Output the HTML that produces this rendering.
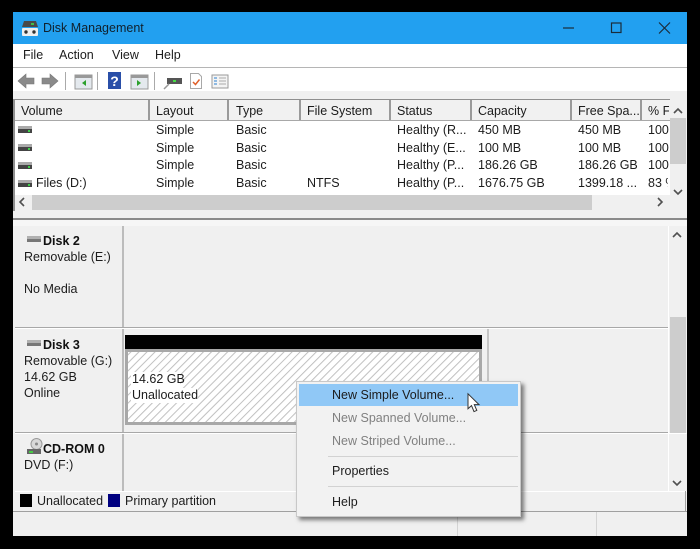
<!DOCTYPE html>
<html><head><meta charset="utf-8"><style>
html,body{margin:0;padding:0;background:#000;width:700px;height:549px;overflow:hidden}
body{position:relative;font-family:"Liberation Sans",sans-serif;font-size:12.5px;color:#1c1c1c;filter:blur(.3px)}
.a,.t{position:absolute}
.t{white-space:nowrap;line-height:16px}
.b{font-weight:bold;color:#111}
.h{position:absolute;top:100px;height:20px;background:#f1f1f1;border-right:2px solid #9a9a9a;box-sizing:border-box}
.g{color:#808080}
svg{position:absolute;overflow:visible}
</style></head><body>
<!-- window -->
<div class="a" style="left:13px;top:12px;width:674px;height:524px;background:#f0f0f0"></div>
<div class="a" style="left:13px;top:12px;width:674px;height:32px;background:#22a0f0"></div>
<svg style="left:21px;top:20px" width="18" height="17" viewBox="0 0 18 17"><path d="M3 1h12l2 6H1z" fill="#4a4a4a"/><rect x="10" y="3" width="3" height="2" fill="#3fc04a"/><rect x="1" y="8" width="16" height="8" rx="1" fill="#efefef"/><circle cx="5" cy="12" r="1.7" fill="#333"/><circle cx="13" cy="12" r="1.7" fill="#333"/></svg>
<div class="t" style="left:43px;top:20px;font-size:12.5px;color:#10202c">Disk Management</div>
<svg style="left:563px;top:20px" width="110" height="16" viewBox="0 0 110 16" fill="none" stroke="#1a2c3a" stroke-width="1.2"><path d="M0 8h11"/><rect x="48.5" y="3" width="9.5" height="9.5"/><path d="M96 2.500l11 11M107 2.500l-11 11"/></svg>
<!-- menu -->
<div class="a" style="left:13px;top:44px;width:674px;height:23px;background:#fff"></div>
<div class="a" style="left:13px;top:67px;width:674px;height:1px;background:#b5b5b5"></div>
<div class="t" style="left:23px;top:47px">File</div>
<div class="t" style="left:59px;top:47px">Action</div>
<div class="t" style="left:112px;top:47px">View</div>
<div class="t" style="left:155px;top:47px">Help</div>
<!-- toolbar -->
<div class="a" style="left:13px;top:68px;width:674px;height:23px;background:#fff"></div>
<svg style="left:17px;top:72px" width="215" height="18" viewBox="0 0 215 18">
<path d="M1 9l8-7v4h8v6H9v4z" fill="#8a8a8a" stroke="#777" stroke-width=".6"/>
<path d="M41 9l-8-7v4h-8v6h8v4z" fill="#8a8a8a" stroke="#777" stroke-width=".6"/>
<rect x="48" y="0" width="1" height="18" fill="#aaa"/>
<rect x="58" y="3" width="17" height="14" fill="#e4e9ee" stroke="#999"/><rect x="58" y="3" width="17" height="3" fill="#999"/><path d="M69 8v6l-4-3z" fill="#2ca02c"/>
<rect x="80" y="0" width="1" height="18" fill="#aaa"/>
<rect x="91" y="0" width="13" height="17" fill="#2a4fa8"/><text x="97.500" y="14" font-family="Liberation Sans" font-size="14" font-weight="bold" fill="#fff" text-anchor="middle">?</text>
<rect x="114" y="3" width="17" height="14" fill="#e4e9ee" stroke="#999"/><rect x="114" y="3" width="17" height="3" fill="#999"/><path d="M120 8v6l4-3z" fill="#2ca02c"/>
<rect x="137" y="0" width="1" height="18" fill="#aaa"/>
<rect x="150" y="6" width="15" height="6" fill="#555"/><rect x="156" y="8" width="3" height="2" fill="#4d4"/><path d="M152 12l-5 5" stroke="#999" stroke-width="1.500"/>
<path d="M173.500 1.500h8l3 3v12h-11z" fill="#fff" stroke="#a8a8a8"/><path d="M176 10l2.500 2.500 4-5" fill="none" stroke="#e0602a" stroke-width="1.500"/>
<rect x="195" y="3" width="16" height="13" fill="#f4f4f4" stroke="#9a9a9a"/><path d="M197 6h3M197 9h3M197 12h3" stroke="#2a80d0"/><path d="M202 6h7M202 9h7M202 12h7" stroke="#aaa"/>
</svg>
<div class="a" style="left:13px;top:91px;width:674px;height:8px;background:#f0f0f0"></div>
<!-- list -->
<div class="a" style="left:13px;top:99px;width:657px;height:1px;background:#8f8f8f"></div>
<div class="a" style="left:13px;top:99px;width:2px;height:112px;background:#8f8f8f"></div>
<div class="a" style="left:15px;top:100px;width:655px;height:95px;background:#fff"></div>
<div class="h" style="left:15px;width:135px"></div>
<div class="h" style="left:150px;width:79px"></div>
<div class="h" style="left:229px;width:72px"></div>
<div class="h" style="left:301px;width:90px"></div>
<div class="h" style="left:391px;width:81px"></div>
<div class="h" style="left:472px;width:100px"></div>
<div class="h" style="left:572px;width:70px"></div>
<div class="h" style="left:642px;width:28px;border-right:0"></div>
<div class="a" style="left:15px;top:120px;width:655px;height:1px;background:#a8a8a8"></div>
<div class="t" style="left:21px;top:103px">Volume</div>
<div class="t" style="left:156px;top:103px">Layout</div>
<div class="t" style="left:236px;top:103px">Type</div>
<div class="t" style="left:307px;top:103px">File System</div>
<div class="t" style="left:397px;top:103px">Status</div>
<div class="t" style="left:478px;top:103px">Capacity</div>
<div class="t" style="left:578px;top:103px">Free Spa...</div>
<div class="t" style="left:648px;top:103px;width:21px;overflow:hidden">% F</div>
<!-- rows -->
<svg style="left:18px;top:125px" width="14" height="60" viewBox="0 0 14 60">
<g id="d"><rect x="0" y="1" width="14" height="3" fill="#aaa"/><rect x="0" y="4" width="14" height="4" fill="#444"/><rect x="10" y="5" width="2" height="2" fill="#3fd04a"/></g>
<g transform="translate(0,18)"><rect x="0" y="1" width="14" height="3" fill="#aaa"/><rect x="0" y="4" width="14" height="4" fill="#444"/><rect x="10" y="5" width="2" height="2" fill="#3fd04a"/></g>
<g transform="translate(0,36)"><rect x="0" y="1" width="14" height="3" fill="#aaa"/><rect x="0" y="4" width="14" height="4" fill="#444"/><rect x="10" y="5" width="2" height="2" fill="#3fd04a"/></g>
<g transform="translate(0,54)"><rect x="0" y="1" width="14" height="3" fill="#aaa"/><rect x="0" y="4" width="14" height="4" fill="#444"/><rect x="10" y="5" width="2" height="2" fill="#3fd04a"/></g>
</svg>
<div class="t" style="left:156px;top:122px">Simple</div><div class="t" style="left:236px;top:122px">Basic</div><div class="t" style="left:397px;top:122px">Healthy (R...</div><div class="t" style="left:478px;top:122px">450 MB</div><div class="t" style="left:578px;top:122px">450 MB</div><div class="t" style="left:648px;top:122px">100</div>
<div class="t" style="left:156px;top:140px">Simple</div><div class="t" style="left:236px;top:140px">Basic</div><div class="t" style="left:397px;top:140px">Healthy (E...</div><div class="t" style="left:478px;top:140px">100 MB</div><div class="t" style="left:578px;top:140px">100 MB</div><div class="t" style="left:648px;top:140px">100</div>
<div class="t" style="left:156px;top:157px">Simple</div><div class="t" style="left:236px;top:157px">Basic</div><div class="t" style="left:397px;top:157px">Healthy (P...</div><div class="t" style="left:478px;top:157px">186.26 GB</div><div class="t" style="left:578px;top:157px">186.26 GB</div><div class="t" style="left:648px;top:157px">100</div>
<div class="t" style="left:36px;top:175px">Files (D:)</div><div class="t" style="left:156px;top:175px">Simple</div><div class="t" style="left:236px;top:175px">Basic</div><div class="t" style="left:307px;top:175px">NTFS</div><div class="t" style="left:397px;top:175px">Healthy (P...</div><div class="t" style="left:478px;top:175px">1676.75 GB</div><div class="t" style="left:578px;top:175px">1399.18 ...</div><div class="t" style="left:648px;top:175px;width:20px;overflow:hidden">83 %</div>
<!-- list scrollbars -->
<div class="a" style="left:670px;top:100px;width:17px;height:111px;background:#f0f0f0"></div>
<div class="a" style="left:670px;top:118px;width:16px;height:46px;background:#cdcdcd"></div>
<div class="a" style="left:15px;top:195px;width:655px;height:16px;background:#f0f0f0"></div>
<div class="a" style="left:32px;top:195px;width:560px;height:15px;background:#cdcdcd"></div>
<svg style="left:15px;top:100px" width="672" height="112" viewBox="0 0 672 112" fill="none" stroke="#505050" stroke-width="1.600"><path d="M659 13l4-4 4 4M659 90l4 4 4-4M9 98l-4 4 4 4M643 98l4 4-4 4"/></svg>
<!-- divider -->
<div class="a" style="left:13px;top:211px;width:674px;height:7px;background:#f0f0f0"></div>
<div class="a" style="left:13px;top:218px;width:674px;height:2px;background:#8a8a8a"></div>
<div class="a" style="left:13px;top:220px;width:674px;height:6px;background:#f6f6f6"></div>
<!-- lower pane -->
<div class="a" style="left:15px;top:226px;width:653px;height:265px;background:#f0f0f0"></div>
<div class="a" style="left:668px;top:226px;width:1px;height:265px;background:#fff"></div>
<div class="a" style="left:122px;top:226px;width:2px;height:265px;background:#bcbcbc"></div>
<div class="a" style="left:15px;top:327px;width:653px;height:1px;background:#a8a8a8"></div>
<div class="a" style="left:15px;top:432px;width:653px;height:1px;background:#a8a8a8"></div>
<div class="a" style="left:15px;top:328px;width:653px;height:1px;background:#fff"></div>
<div class="a" style="left:15px;top:433px;width:653px;height:1px;background:#fff"></div>
<!-- right scrollbar -->
<div class="a" style="left:669px;top:226px;width:18px;height:265px;background:#f0f0f0"></div>
<div class="a" style="left:670px;top:317px;width:16px;height:116px;background:#cdcdcd"></div>
<div class="a" style="left:669px;top:433px;width:18px;height:1px;background:#fff"></div>
<svg style="left:669px;top:226px" width="18" height="265" viewBox="0 0 18 265" fill="none" stroke="#505050" stroke-width="1.600"><path d="M4 11l4-4 4 4M4 255l4 4 4-4"/></svg>
<!-- disk labels -->
<svg style="left:27px;top:236px" width="14" height="8"><rect width="14" height="3" fill="#b0b0b0"/><rect y="3" width="14" height="3" fill="#777"/></svg>
<div class="t b" style="left:43px;top:233px">Disk 2</div>
<div class="t" style="left:24px;top:249px">Removable (E:)</div>
<div class="t" style="left:24px;top:281px">No Media</div>
<svg style="left:27px;top:340px" width="14" height="8"><rect width="14" height="3" fill="#b0b0b0"/><rect y="3" width="14" height="3" fill="#777"/></svg>
<div class="t b" style="left:43px;top:337px">Disk 3</div>
<div class="t" style="left:24px;top:353px">Removable (G:)</div>
<div class="t" style="left:24px;top:369px">14.62 GB</div>
<div class="t" style="left:24px;top:385px">Online</div>
<svg style="left:27px;top:438px" width="16" height="17" viewBox="0 0 16 17"><circle cx="9.500" cy="6" r="5.500" fill="#d8d8d8" stroke="#999"/><circle cx="9.500" cy="6" r="1.500" fill="#888"/><rect x="0" y="11" width="14" height="5" fill="#666"/><rect x="2" y="13" width="4" height="2" fill="#4c4"/></svg>
<div class="t b" style="left:43px;top:441px">CD-ROM 0</div>
<div class="t" style="left:24px;top:457px">DVD (F:)</div>
<!-- partition -->
<div class="a" style="left:125px;top:335px;width:357px;height:14px;background:#000"></div>
<div class="a" style="left:487px;top:329px;width:2px;height:103px;background:#c4c4c4"></div>
<svg style="left:125px;top:349px" width="357" height="76" viewBox="0 0 357 76">
<defs><pattern id="p" width="5.700" height="8" patternUnits="userSpaceOnUse" patternTransform="rotate(45)"><rect width="5.700" height="8" fill="#fff"/><rect width="1" height="8" fill="#c0c0c0"/></pattern></defs>
<rect x="0" y="0" width="357" height="76" fill="#a8a8a8"/>
<rect x="3" y="3" width="351" height="70" fill="url(#p)"/>
</svg>
<div class="a" style="left:131px;top:372px;width:49px;height:16px;background:#fff"></div>
<div class="a" style="left:131px;top:388px;width:67px;height:15px;background:#fff"></div>
<div class="t" style="left:132px;top:371px">14.62 GB</div>
<div class="t" style="left:132px;top:387px">Unallocated</div>
<!-- legend -->
<div class="a" style="left:15px;top:491px;width:672px;height:1px;background:#fff"></div>
<div class="a" style="left:20px;top:494px;width:12px;height:13px;background:#000"></div>
<div class="t" style="left:37px;top:493px">Unallocated</div>
<div class="a" style="left:108px;top:494px;width:12px;height:13px;background:#000080"></div>
<div class="t" style="left:125px;top:493px">Primary partition</div>
<div class="a" style="left:13px;top:511px;width:674px;height:1px;background:#a0a0a0"></div>
<div class="a" style="left:685px;top:491px;width:1px;height:20px;background:#a0a0a0"></div>
<div class="a" style="left:457px;top:512px;width:1px;height:24px;background:#d4d4d4"></div>
<div class="a" style="left:596px;top:512px;width:1px;height:24px;background:#d4d4d4"></div>
<!-- context menu -->
<div class="a" style="left:296px;top:381px;width:225px;height:136px;background:#f2f2f2;border:1px solid #c8c8c8;box-sizing:border-box;box-shadow:3px 3px 4px rgba(0,0,0,.5)"></div>
<div class="a" style="left:299px;top:384px;width:219px;height:22px;background:#90c8f6"></div>
<div class="t" style="left:332px;top:387px">New Simple Volume...</div>
<div class="t g" style="left:332px;top:410px">New Spanned Volume...</div>
<div class="t g" style="left:332px;top:433px">New Striped Volume...</div>
<div class="a" style="left:328px;top:456px;width:190px;height:1px;background:#d2d2d2"></div>
<div class="t" style="left:332px;top:463px">Properties</div>
<div class="a" style="left:328px;top:486px;width:190px;height:1px;background:#d2d2d2"></div>
<div class="t" style="left:332px;top:494px">Help</div>
<svg style="left:467px;top:393px" width="15" height="21" viewBox="0 0 15 21"><path d="M1 .8v15l3.500-3.200 2.500 6 2.800-1.200-2.500-5.800h4.700z" fill="#fff" stroke="#333" stroke-width="1"/></svg>
</body></html>
